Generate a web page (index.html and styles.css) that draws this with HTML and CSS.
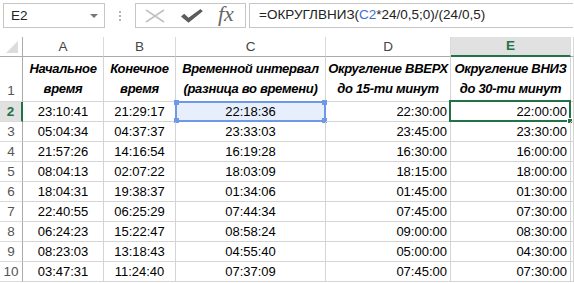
FILE: index.html
```html
<!DOCTYPE html>
<html lang="ru">
<head>
<meta charset="utf-8">
<title>Округление времени</title>
<link rel="stylesheet" href="styles.css">
</head>
<body>
<div class="toolbar">
  <div class="namebox"><span class="name">E2</span><span class="arrow"></span></div>
  <div class="grip"><i></i><i></i><i></i></div>
  <div class="buttons">
    <svg class="ic-x" width="20" height="14" viewBox="0 0 20 14"><path d="M1 1 L19 13 M19 1 L1 13" stroke="#c2c2c2" stroke-width="1.6" fill="none"/></svg>
    <svg class="ic-ok" width="22" height="14" viewBox="0 0 22 14"><polygon points="0,7.5 3.2,4.8 7.5,8.8 19.5,0 21.8,2.2 7.5,13.8" fill="#5c5c5c"/></svg>
    <span class="fx">fx</span>
  </div>
  <div class="formula">=ОКРУГЛВНИЗ(<span class="ref">C2</span>*24/0,5;0)/(24/0,5)</div>
</div>
<div class="sheet">
  <div class="hd corner"><span class="tri"></span></div>
  <div class="hd col">A</div>
  <div class="hd col">B</div>
  <div class="hd col">C</div>
  <div class="hd col">D</div>
  <div class="hd col active-col">E</div>
  <div class="hd col"></div>

  <div class="rh rh1">1</div>
  <div class="c th">Начальное<br>время</div>
  <div class="c th">Конечное<br>время</div>
  <div class="c th">Временной интервал<br>(разница во времени)</div>
  <div class="c th">Округление ВВЕРХ<br>до 15-ти минут</div>
  <div class="c th">Округление ВНИЗ<br>до 30-ти минут</div>
  <div class="c"></div>

  <div class="rh active-row">2</div>
  <div class="c ctr">23:10:41</div>
  <div class="c ctr">21:29:17</div>
  <div class="c ctr range">22:18:36<div class="selbox"><i class="hdl tl"></i><i class="hdl tr"></i><i class="hdl bl"></i><i class="hdl br"></i></div></div>
  <div class="c rt">22:30:00</div>
  <div class="c rt cur">22:00:00<div class="curbox"><i class="fill"></i></div></div>
  <div class="c"></div>

  <div class="rh">3</div>
  <div class="c ctr">05:04:34</div>
  <div class="c ctr">04:37:37</div>
  <div class="c ctr">23:33:03</div>
  <div class="c rt">23:45:00</div>
  <div class="c rt">23:30:00</div>
  <div class="c"></div>

  <div class="rh">4</div>
  <div class="c ctr">21:57:26</div>
  <div class="c ctr">14:16:54</div>
  <div class="c ctr">16:19:28</div>
  <div class="c rt">16:30:00</div>
  <div class="c rt">16:00:00</div>
  <div class="c"></div>

  <div class="rh">5</div>
  <div class="c ctr">08:04:13</div>
  <div class="c ctr">02:07:22</div>
  <div class="c ctr">18:03:09</div>
  <div class="c rt">18:15:00</div>
  <div class="c rt">18:00:00</div>
  <div class="c"></div>

  <div class="rh">6</div>
  <div class="c ctr">18:04:31</div>
  <div class="c ctr">19:38:37</div>
  <div class="c ctr">01:34:06</div>
  <div class="c rt">01:45:00</div>
  <div class="c rt">01:30:00</div>
  <div class="c"></div>

  <div class="rh">7</div>
  <div class="c ctr">22:40:55</div>
  <div class="c ctr">06:25:29</div>
  <div class="c ctr">07:44:34</div>
  <div class="c rt">07:45:00</div>
  <div class="c rt">07:30:00</div>
  <div class="c"></div>

  <div class="rh">8</div>
  <div class="c ctr">06:24:23</div>
  <div class="c ctr">15:22:47</div>
  <div class="c ctr">08:58:24</div>
  <div class="c rt">09:00:00</div>
  <div class="c rt">08:30:00</div>
  <div class="c"></div>

  <div class="rh">9</div>
  <div class="c ctr">08:23:03</div>
  <div class="c ctr">13:18:43</div>
  <div class="c ctr">04:55:40</div>
  <div class="c rt">05:00:00</div>
  <div class="c rt">04:30:00</div>
  <div class="c"></div>

  <div class="rh">10</div>
  <div class="c ctr">03:47:31</div>
  <div class="c ctr">11:24:40</div>
  <div class="c ctr">07:37:09</div>
  <div class="c rt">07:45:00</div>
  <div class="c rt">07:30:00</div>
  <div class="c"></div>
</div>
</body>
</html>
```

FILE: styles.css
```css
* { box-sizing: border-box; }
html, body { margin: 0; padding: 0; background: #fff; }
body {
  width: 574px;
  height: 283px;
  overflow: hidden;
  font-family: "Liberation Sans", Arial, sans-serif;
  font-size: 13px;
  color: #000;
}

/* formula bar */
.toolbar {
  height: 37px;
  display: flex;
  align-items: flex-start;
  padding: 3px 0 0 3px;
}
.namebox {
  width: 102px;
  height: 25px;
  border: 1px solid #c6c6c6;
  display: flex;
  align-items: center;
  justify-content: space-between;
  padding: 0 6px 0 7px;
  font-size: 13.5px;
  color: #222;
}
.arrow {
  width: 0;
  height: 0;
  border-left: 4px solid transparent;
  border-right: 4px solid transparent;
  border-top: 4px solid #777;
}
.grip {
  width: 30px;
  height: 25px;
  display: flex;
  flex-direction: column;
  align-items: center;
  justify-content: center;
  gap: 2px;
}
.grip i {
  display: block;
  width: 2px;
  height: 2px;
  background: #b5b5b5;
}
.buttons {
  width: 111px;
  height: 25px;
  border: 1px solid #c6c6c6;
  display: flex;
  align-items: center;
  padding-left: 9px;
}
.ic-x { margin-right: 16px; }
.ic-ok { margin-right: 15px; }
.fx {
  font-family: "Liberation Serif", "Times New Roman", serif;
  font-style: italic;
  font-size: 22px;
  color: #666;
  line-height: 1;
  margin-top: -3px;
}
.formula {
  margin-left: 3px;
  width: 324px;
  height: 25px;
  border: 1px solid #c6c6c6;
  border-right: none;
  padding-left: 9px;
  line-height: 22px;
  font-size: 13.5px;
  color: #222;
  white-space: nowrap;
}
.ref { color: #3c6fd5; }

/* sheet grid */
.sheet {
  display: grid;
  grid-template-columns: 23px 81px 72px 150px 125px 120px 1fr;
  grid-template-rows: 20px 45px repeat(9, 20px);
}
.hd {
  border-bottom: 1px solid #ababab;
  border-right: 1px solid #dadada;
  color: #444;
  text-align: center;
  line-height: 19px;
  font-size: 13.5px;
}
.corner {
  position: relative;
  border-right: 1px solid #ababab;
}
.tri {
  position: absolute;
  right: 4px;
  bottom: 3px;
  width: 0;
  height: 0;
  border-left: 12px solid transparent;
  border-bottom: 12px solid #dcdcdc;
}
.active-col {
  background: #e1e1e1;
  color: #217346;
  font-weight: bold;
  border-bottom: 2px solid #217346;
  line-height: 18px;
}
.rh {
  border-right: 1px solid #ababab;
  border-bottom: 1px solid #dadada;
  color: #555;
  text-align: center;
  line-height: 19px;
  font-size: 13.5px;
}
.rh1 {
  display: flex;
  align-items: flex-end;
  justify-content: center;
  padding-bottom: 1px;
}
.active-row {
  background: #e1e1e1;
  color: #217346;
  font-weight: bold;
  border-right: 2px solid #217346;
}
.c {
  border-right: 1px solid #d4d4d4;
  border-bottom: 1px solid #d4d4d4;
  line-height: 20px;
  white-space: nowrap;
  position: relative;
}
.ctr { text-align: center; }
.rt { text-align: right; padding-right: 3px; }
.th {
  font-weight: bold;
  font-style: italic;
  text-align: center;
  display: flex;
  align-items: flex-end;
  justify-content: center;
  line-height: 20px;
  font-size: 13px;
  padding-bottom: 2px;
  letter-spacing: -0.3px;
}

/* selection overlays */
.range { background: #e8effc; }
.selbox {
  position: absolute;
  left: -1px;
  top: -1px;
  right: -1px;
  bottom: -1px;
  border: 2px solid #6f98e6;
}
.hdl {
  position: absolute;
  width: 5px;
  height: 5px;
  background: #6f98e6;
}
.tl { left: -3px; top: -3px; }
.tr { right: -3px; top: -3px; }
.bl { left: -3px; bottom: -3px; }
.br { right: -3px; bottom: -3px; }
.curbox {
  position: absolute;
  left: -2px;
  top: -2px;
  right: -1px;
  bottom: -1px;
  border: 2px solid #217346;
}
.fill {
  position: absolute;
  right: -4px;
  bottom: -4px;
  width: 6px;
  height: 6px;
  background: #217346;
  border: 1px solid #fff;
}
```
